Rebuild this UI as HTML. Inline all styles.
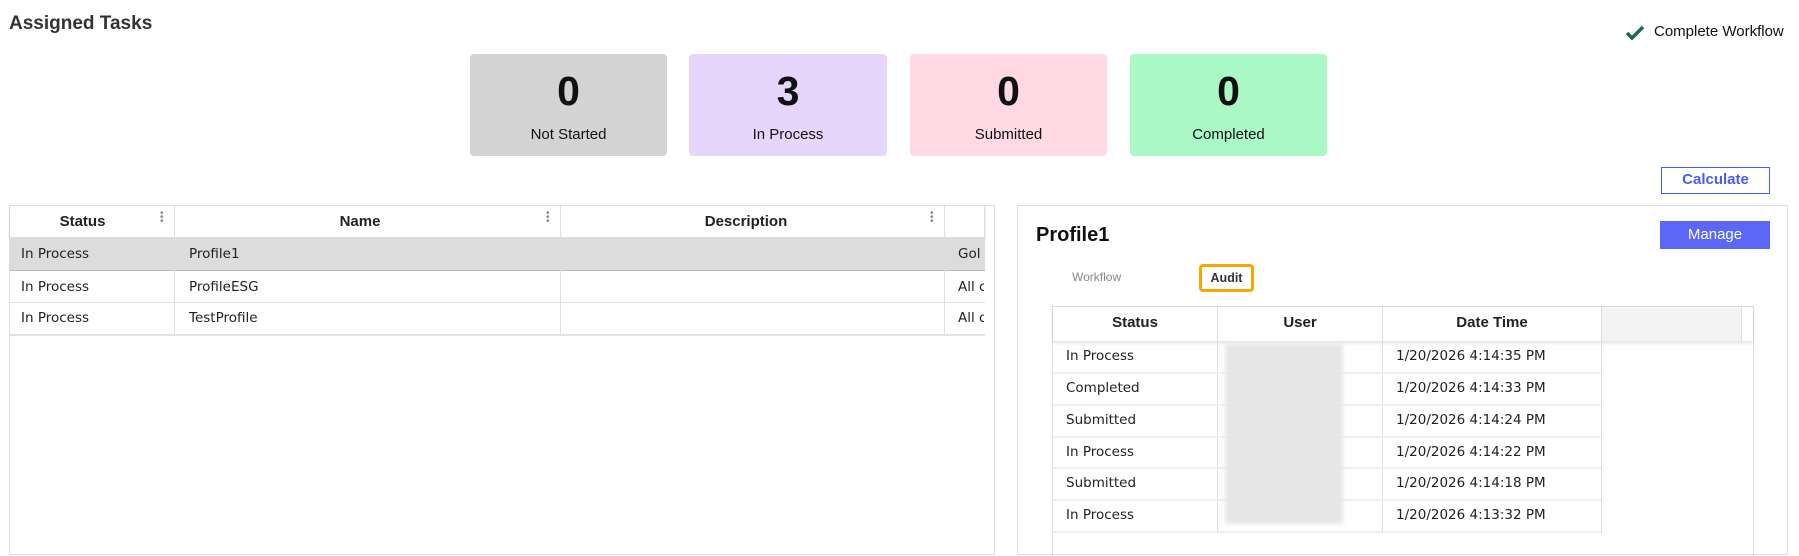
<!DOCTYPE html>
<html><head><style>
*{box-sizing:border-box;margin:0;padding:0}
body{width:1799px;height:549px;overflow:hidden;background:#fff;font-family:"Liberation Sans",Arial,sans-serif;color:#111;position:relative}
.a{position:absolute}
.card{position:absolute;top:54px;height:102px;border-radius:4px;text-align:center}
.card .n{position:absolute;left:0;right:0;font-size:41px;font-weight:bold;line-height:1;top:17px}
.card .l{position:absolute;left:0;right:0;top:72px;font-size:15px}
.cell{position:absolute;font-family:"DejaVu Sans",sans-serif;font-size:13.5px;color:#222;white-space:nowrap}
.hd{position:absolute;font-weight:bold;font-size:15px;text-align:center;color:#222}
.dots{position:absolute;width:3px;color:#888;font-size:10px;line-height:4px}
</style></head><body>
<div class="a" style="left:9px;top:13px;font-size:19px;font-weight:bold;color:#333">Assigned Tasks</div>
<svg class="a" style="left:1625px;top:24px" width="20" height="18" viewBox="0 0 20 18"><path d="M2 9 L7 14 L18 3" stroke="#1a6b4a" stroke-width="3.5" fill="none"/></svg>
<div class="a" style="left:1654px;top:23px;font-size:15px;color:#111">Complete Workflow</div>

<div class="card" style="left:470px;width:197px;background:#d3d3d3"><div class="n">0</div><div class="l">Not Started</div></div>
<div class="card" style="left:689px;width:198px;background:#e7d6fc"><div class="n">3</div><div class="l">In Process</div></div>
<div class="card" style="left:910px;width:197px;background:#ffd9e4"><div class="n">0</div><div class="l">Submitted</div></div>
<div class="card" style="left:1130px;width:197px;background:#a9f8c6"><div class="n">0</div><div class="l">Completed</div></div>

<div class="a" style="left:1661px;top:167px;width:109px;height:27px;border:1.5px solid #4a5cf0;color:#4a5cf0;font-size:15px;font-weight:bold;text-align:center;line-height:24px">Calculate</div>

<div class="a" style="left:9px;top:205px;width:986px;height:350px;border:1px solid #ddd"></div>
<div class="a" style="left:10px;top:206px;width:975px;height:31px;background:#fff;box-shadow:0 2px 3px rgba(0,0,0,.12)"></div>
<div class="a" style="left:10px;top:237px;width:975px;height:34px;background:#dcdcdc;border-bottom:1px solid #bbb"></div>
<div class="a" style="left:10px;top:302px;width:975px;height:1px;background:#e2e2e2"></div>
<div class="a" style="left:10px;top:334px;width:975px;height:2px;background:#e2e2e2"></div>
<div class="a" style="left:174px;top:206px;width:1px;height:129px;background:#ddd"></div>
<div class="a" style="left:560px;top:206px;width:1px;height:129px;background:#ddd"></div>
<div class="a" style="left:944px;top:206px;width:1px;height:129px;background:#ddd"></div>
<div class="a" style="left:984px;top:206px;width:1px;height:31px;background:#ddd"></div>
<div class="hd" style="left:10px;width:145px;top:213px">Status</div>
<div class="hd" style="left:175px;width:370px;top:213px">Name</div>
<div class="hd" style="left:561px;width:370px;top:213px">Description</div>
<div class="dots" style="left:160px;top:212px">•<br>•<br>•</div>
<div class="dots" style="left:546px;top:212px">•<br>•<br>•</div>
<div class="dots" style="left:930px;top:212px">•<br>•<br>•</div>
<div class="cell" style="left:21px;top:246px">In Process</div><div class="cell" style="left:189px;top:246px">Profile1</div><div class="cell" style="left:958px;top:246px;width:26px;overflow:hidden">Gol</div>
<div class="cell" style="left:21px;top:279px">In Process</div><div class="cell" style="left:189px;top:279px">ProfileESG</div><div class="cell" style="left:958px;top:279px;width:26px;overflow:hidden">All c</div>
<div class="cell" style="left:21px;top:310px">In Process</div><div class="cell" style="left:189px;top:310px">TestProfile</div><div class="cell" style="left:958px;top:310px;width:26px;overflow:hidden">All c</div>

<div class="a" style="left:1017px;top:205px;width:771px;height:350px;border:1px solid #ddd"></div>
<div class="a" style="left:1036px;top:224px;font-size:20px;font-weight:bold">Profile1</div>
<div class="a" style="left:1660px;top:221px;width:110px;height:28px;background:#5a67f8;color:#fff;font-size:15px;text-align:center;line-height:28px">Manage</div>
<div class="a" style="left:1072px;top:270px;font-size:12px;color:#888">Workflow</div>
<div class="a" style="left:1199px;top:264px;width:55px;height:28px;border:3px solid #f6a800;border-radius:4px;font-size:12.5px;font-weight:bold;text-align:center;line-height:22px;color:#333">Audit</div>

<div class="a" style="left:1052px;top:306px;width:702px;height:250px;border-left:1px solid #ddd;border-right:1px solid #ddd;border-top:1px solid #ddd"></div>
<div class="a" style="left:1053px;top:307px;width:700px;height:34px;background:#fff;box-shadow:0 2px 4px rgba(0,0,0,.12)"></div>
<div class="a" style="left:1601px;top:307px;width:140px;height:34px;background:#f3f3f3"></div>
<div class="a" style="left:1217px;top:307px;width:1px;height:226px;background:#ddd"></div>
<div class="a" style="left:1382px;top:307px;width:1px;height:226px;background:#ddd"></div>
<div class="a" style="left:1601px;top:307px;width:1px;height:226px;background:#ddd"></div>
<div class="a" style="left:1741px;top:307px;width:1px;height:34px;background:#ddd"></div>
<div class="hd" style="left:1053px;width:164px;top:314px">Status</div>
<div class="hd" style="left:1218px;width:164px;top:314px">User</div>
<div class="hd" style="left:1383px;width:218px;top:314px">Date Time</div>
<div class="a" style="left:1053px;top:372px;width:548px;height:2px;background:#eee"></div>
<div class="a" style="left:1053px;top:404px;width:548px;height:2px;background:#eee"></div>
<div class="a" style="left:1053px;top:436px;width:548px;height:2px;background:#eee"></div>
<div class="a" style="left:1053px;top:467px;width:548px;height:2px;background:#eee"></div>
<div class="a" style="left:1053px;top:499px;width:548px;height:2px;background:#eee"></div>
<div class="a" style="left:1053px;top:531px;width:548px;height:2px;background:#eee"></div>
<div class="a" style="left:1225px;top:344px;width:118px;height:180px;background:#e6e6e6;filter:blur(2px)"></div>
<div class="cell" style="left:1066px;top:348px">In Process</div><div class="cell" style="left:1396px;top:348px">1/20/2026 4:14:35 PM</div>
<div class="cell" style="left:1066px;top:380px">Completed</div><div class="cell" style="left:1396px;top:380px">1/20/2026 4:14:33 PM</div>
<div class="cell" style="left:1066px;top:412px">Submitted</div><div class="cell" style="left:1396px;top:412px">1/20/2026 4:14:24 PM</div>
<div class="cell" style="left:1066px;top:444px">In Process</div><div class="cell" style="left:1396px;top:444px">1/20/2026 4:14:22 PM</div>
<div class="cell" style="left:1066px;top:475px">Submitted</div><div class="cell" style="left:1396px;top:475px">1/20/2026 4:14:18 PM</div>
<div class="cell" style="left:1066px;top:507px">In Process</div><div class="cell" style="left:1396px;top:507px">1/20/2026 4:13:32 PM</div>
</body></html>
